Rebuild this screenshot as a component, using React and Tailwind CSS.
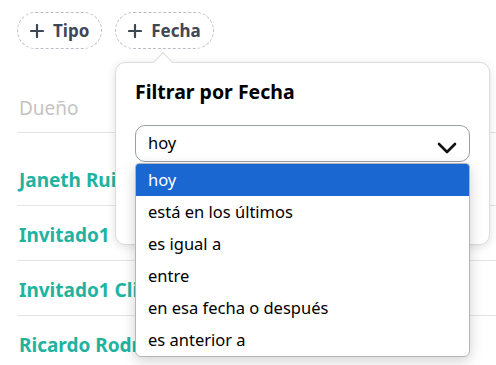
import { useState } from "react";

const options = [
  "hoy",
  "está en los últimos",
  "es igual a",
  "entre",
  "en esa fecha o después",
  "es anterior a",
];

const owners = ["Janeth Ruiz", "Invitado1", "Invitado1 Cliente", "Ricardo Rodríguez"];

function Plus() {
  return (
    <svg width="14" height="14" viewBox="0 0 14 14" className="shrink-0">
      <path d="M7 1v12M1 7h12" stroke="#3d4756" strokeWidth="2.2" strokeLinecap="round" />
    </svg>
  );
}

function Chip({ label }) {
  return (
    <button
      type="button"
      className="flex h-[37px] items-center gap-[9px] rounded-full border border-dashed border-[#b9bec6] px-[12px] text-[17px] font-bold text-[#3d4756]"
    >
      <Plus />
      {label}
    </button>
  );
}

export default function App() {
  const [selected, setSelected] = useState(0);

  return (
    <div
      className="relative h-[365px] w-[496px] overflow-hidden bg-white"
      style={{ fontFamily: '"Noto Sans", "Open Sans", sans-serif' }}
    >
      {/* Filter chips */}
      <div className="flex gap-[13px] pl-[17px] pt-[12px]">
        <Chip label="Tipo" />
        <Chip label="Fecha" />
      </div>

      {/* Owners table */}
      <div className="ml-[17px] mt-[36px]">
        <div className="flex h-[48px] items-center border-b border-[#e4e4e4] pl-[2px] text-[19px] text-[#c4c4c4]">
          Dueño
        </div>
        {owners.map((name, i) => (
          <div
            key={name}
            className={`flex items-center border-b border-[#e4e4e4] pl-[2px] text-[19px] font-bold whitespace-nowrap text-[#21b3a0] ${
              i === 0 ? "h-[73px] pt-[22px]" : "h-[55px] pt-[5px]"
            }`}
          >
            {name}
          </div>
        ))}
      </div>

      {/* Popover */}
      <div className="absolute left-[115px] top-[62px] h-[183px] w-[375px] rounded-[10px] border border-[#dcdcdc] bg-white px-[19px] pt-[15px] shadow-[0_2px_10px_rgba(0,0,0,0.12)]">
        <div className="absolute -top-[8px] left-[40px] h-[14px] w-[14px] rotate-45 border-l border-t border-[#dcdcdc] bg-white" />
        <div className="text-[19.5px] font-bold leading-[28px] text-black">Filtrar por Fecha</div>
        <div className="mt-[19px] flex h-[37px] items-center justify-between rounded-[10px] border border-[#9aa0a8] pl-[12px] pr-[12px] text-[16.5px] text-black">
          <span>{options[selected]}</span>
          <svg width="20" height="14" viewBox="0 0 20 14" className="mt-[8px]">
            <path d="M2 3l8 8 8-8" fill="none" stroke="#111" strokeWidth="2.6" strokeLinecap="round" strokeLinejoin="round" />
          </svg>
        </div>
        <div className="mt-[34px] h-[29px] rounded-[6px] bg-[#21b3a0]" />
      </div>

      {/* Native-like option list */}
      <ul className="absolute left-[135px] top-[163px] w-[335px] overflow-hidden rounded-b-[6px] rounded-t-[4px] border border-[#b5b5b5] bg-white shadow-[0_4px_14px_rgba(0,0,0,0.18)]">
        {options.map((opt, i) => (
          <li
            key={opt}
            onClick={() => setSelected(i)}
            className={`flex h-[32px] items-center px-[12px] text-[16.5px] ${
              i === selected ? "bg-[#1a67d2] text-white" : "text-black"
            }`}
          >
            {opt}
          </li>
        ))}
      </ul>
    </div>
  );
}
